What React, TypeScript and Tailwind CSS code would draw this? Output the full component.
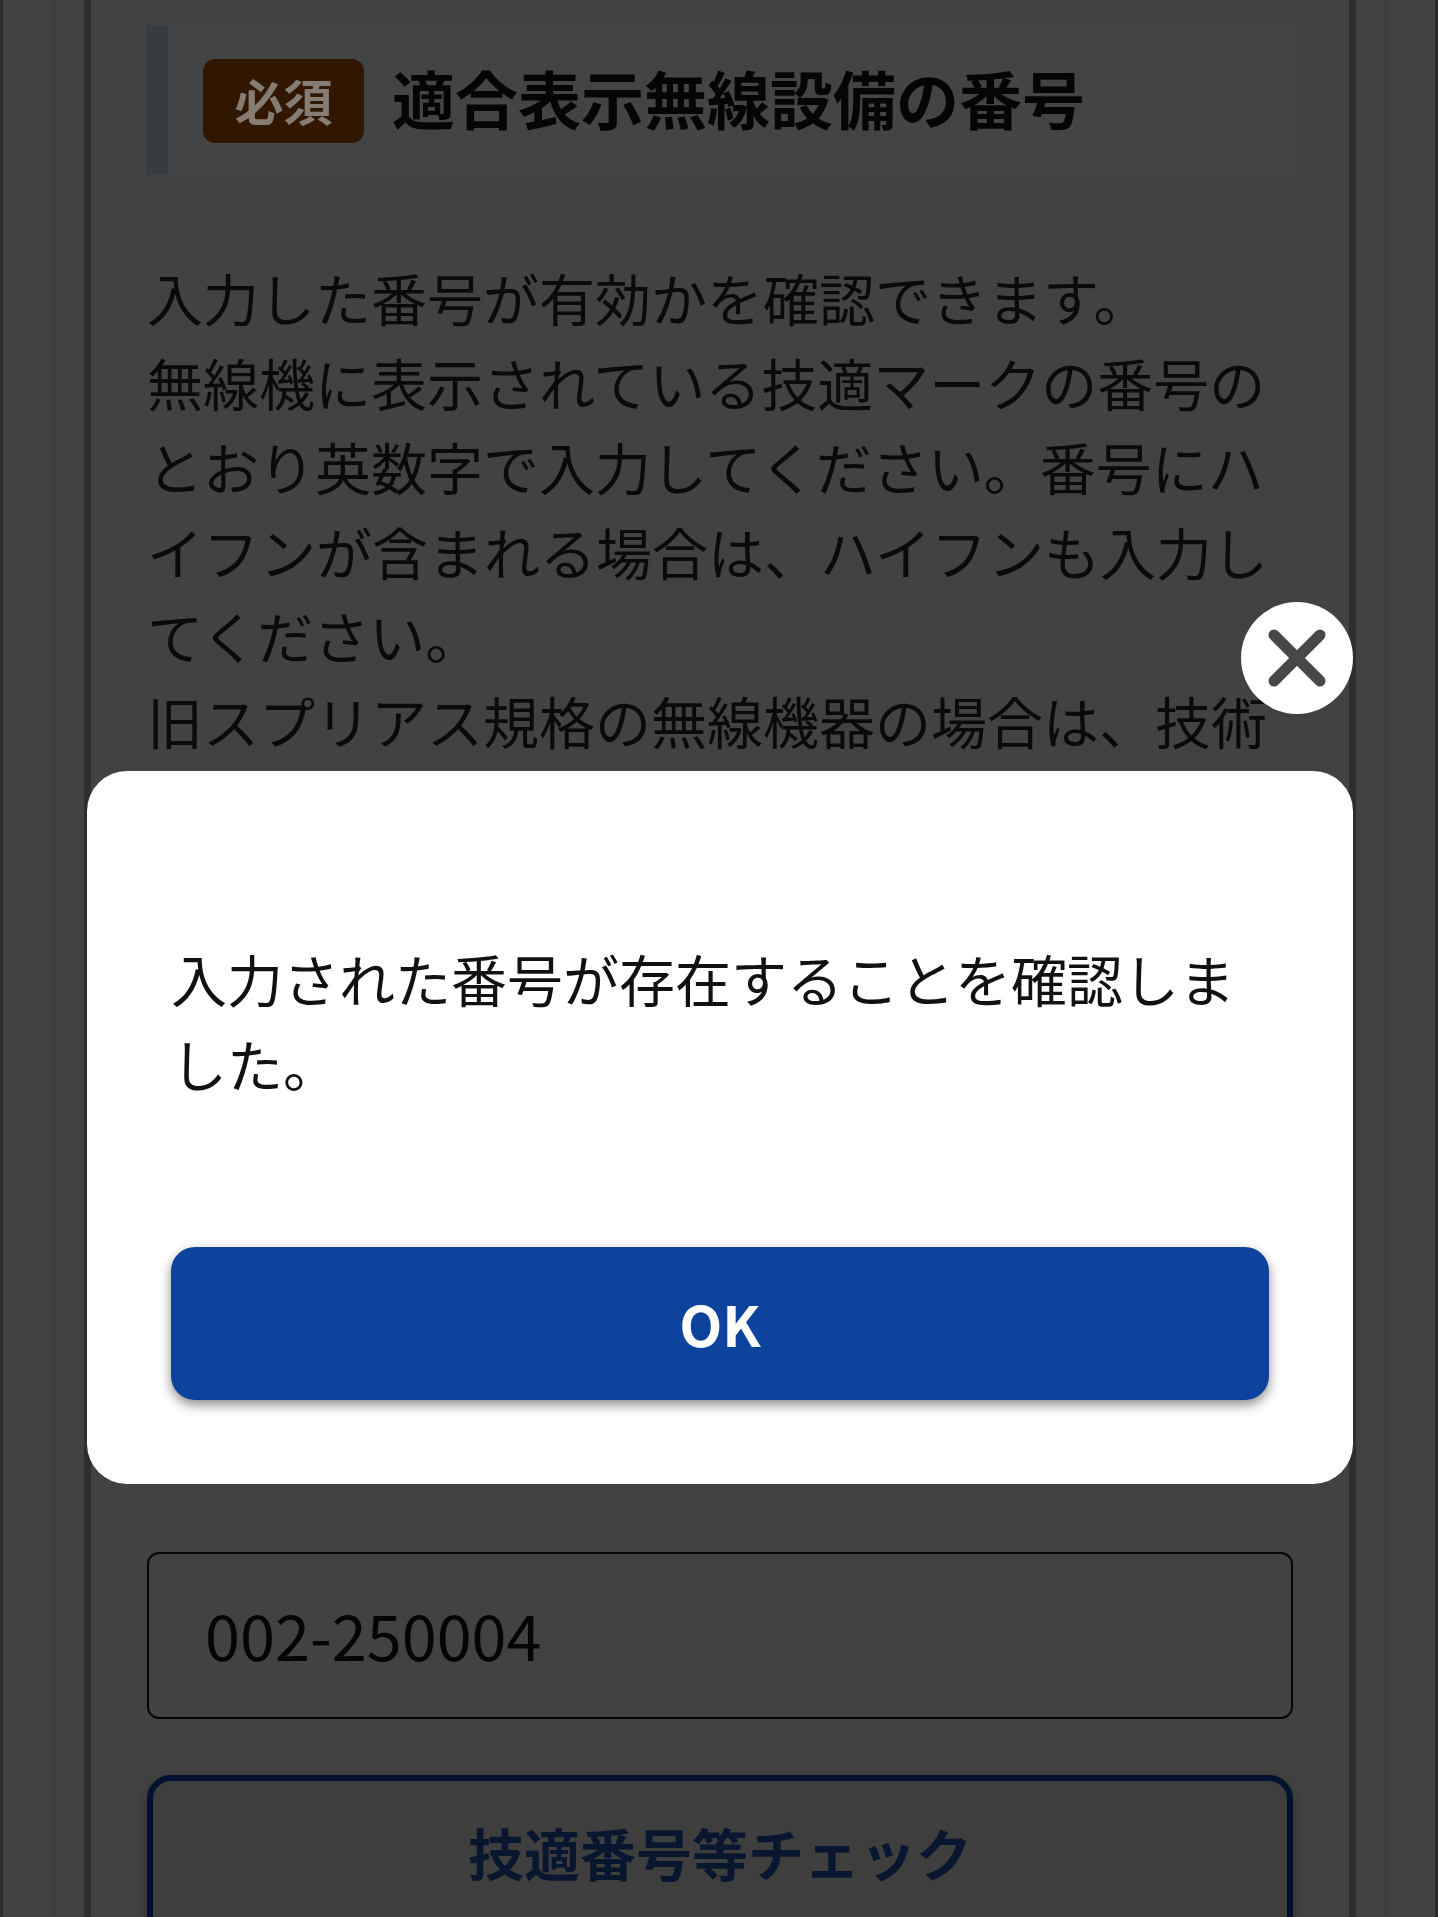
import { X } from "lucide-react";

const FONT = "font-['Noto_Sans_CJK_JP','Noto_Sans',sans-serif]";

export default function App() {
  return (
    <div className={`relative h-[1917px] overflow-hidden bg-[#424242] ${FONT}`}>
      {/* Page behind the dialog, already dimmed */}
      <div className="h-full border-x-[3px] border-x-[#2a2b30] pl-[53px] pr-[51px]">
        <div className="h-full border-x-[28px] border-[#424242] shadow-[0_0_7px_rgba(0,0,0,0.2)]">
          <div className="h-full border-x-[7px] border-[#2e2e2e] bg-[#424242] px-[56px] pt-[25px]">
            <div className="-mr-[2px] flex h-[150px] items-center gap-[28px] border-l-[21px] border-[#363c42] bg-[#424446] pl-[35px]">
              <span className="mt-[2px] flex h-[84px] w-[161px] items-center justify-center rounded-[12px] bg-[#321700] pb-[3px] text-[49px] font-bold text-[#857c74]">
                必須
              </span>
              <h2 className="pb-[6px] text-[63px] font-bold text-[#050505]">
                適合表示無線設備の番号
              </h2>
            </div>

            <p className="mt-[80px] h-[1297px] text-[56px] leading-[84.5px] text-[#0a0a0a]">
              入力した番号が有効かを確認できます。
              <br />
              無線機に表示されている技適マークの番号の
              <br />
              とおり英数字で入力してください。番号にハ
              <br />
              イフンが含まれる場合は、ハイフンも入力し
              <br />
              てください。
              <br />
              旧スプリアス規格の無線機器の場合は、技術
            </p>

            <div className="flex h-[167px] items-center rounded-[12px] border-[2.5px] border-[#050505] pb-[3px] pl-[56px] text-[63px] text-[#050505]">
              002-250004
            </div>

            <button className="mt-[56px] h-[180px] w-full rounded-[24px] border-[6px] border-[#02122e] bg-[#3e3e3e] pb-[27px] text-[56px] font-bold text-[#08162f] shadow-[0_4px_12px_rgba(0,0,0,0.3)]">
              技適番号等チェック
            </button>
          </div>
        </div>
      </div>

      {/* Result dialog */}
      <div className="absolute left-[87px] top-[771px] flex h-[713px] w-[1266px] flex-col rounded-[40px] bg-white px-[84px]">
        <p className="mt-[165px] h-[311px] text-[56px] leading-[84.5px] text-[#111111]">
          入力された番号が存在することを確認しました。
        </p>
        <button className="flex h-[153px] items-center justify-center rounded-[24px] bg-[#0e439d] pb-[2px] text-[56px] font-bold text-white shadow-[0_5px_12px_rgba(0,0,0,0.45)]">
          OK
        </button>
        <button
          aria-label="閉じる"
          className="absolute -top-[169px] right-0 flex h-[112px] w-[112px] items-center justify-center rounded-full bg-white pb-[1px] text-[#484848]"
        >
          <X size={92} strokeWidth={2.87} />
        </button>
      </div>
    </div>
  );
}
